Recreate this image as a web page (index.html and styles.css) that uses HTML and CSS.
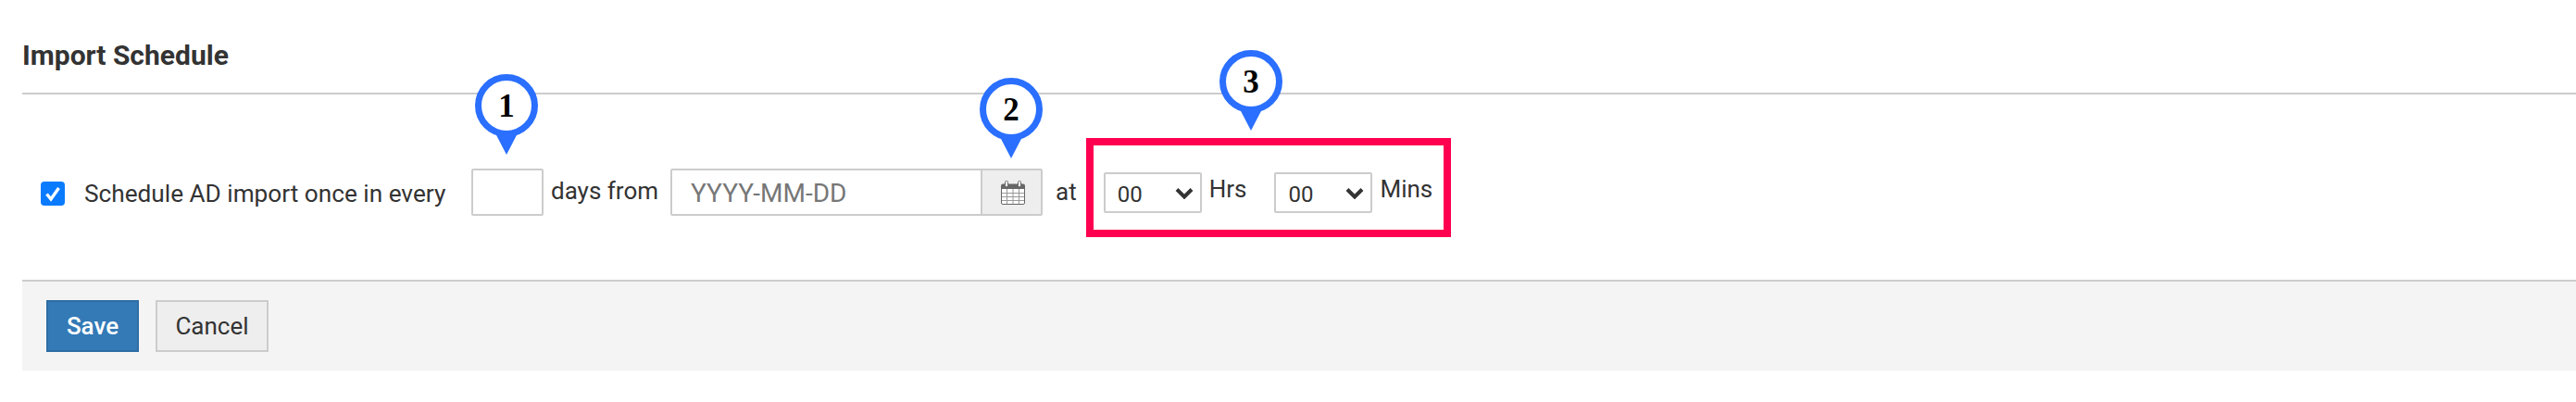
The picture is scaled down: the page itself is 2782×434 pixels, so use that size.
FILE: index.html
```html
<!DOCTYPE html>
<html lang="en">

<head>
    <meta charset="UTF-8">
    <title>Import Schedule</title>
    <link rel="stylesheet" href="styles.css">
</head>

<body>
    <div class="panel">
        <h3 class="panel-title">Import Schedule</h3>

        <form class="schedule-row">
            <input type="checkbox" class="schedule-check" id="scheduleCheck" checked>
            <label class="schedule-label" for="scheduleCheck">Schedule AD import once in every</label>
            <input type="text" class="days-input">
            <span class="row-text days-text">days from</span>
            <div class="date-group">
                <input type="text" class="date-input" placeholder="YYYY-MM-DD">
                <span class="date-addon">
                    <svg width="26" height="26" viewBox="0 0 26 26">
                        <rect x="0.5" y="4" width="25" height="21.5" rx="1.5" fill="#fff" stroke="#666"/>
                        <path d="M0 5.5A2 2 0 0 1 2 4H24A2 2 0 0 1 26 5.5V9H0Z" fill="#666"/>
                        <path d="M1 13.5H25M1 17.5H25M1 21.5H25M6.5 9V25M13 9V25M19.5 9V25" stroke="#999" stroke-width="1" fill="none"/>
                        <rect x="4.5" y="0.5" width="3" height="6" rx="1" fill="#fff" stroke="#666"/>
                        <rect x="18.5" y="0.5" width="3" height="6" rx="1" fill="#fff" stroke="#666"/>
                    </svg>
                </span>
            </div>
            <span class="row-text at-text">at</span>
            <div class="time-box">
                <select class="time-select"><option>00</option></select>
                <span class="row-text hrs-text">Hrs</span>
                <select class="time-select mins-select"><option>00</option></select>
                <span class="row-text mins-text">Mins</span>
            </div>
        </form>

        <div class="panel-footer">
            <button type="button" class="btn btn-primary">Save</button>
            <button type="button" class="btn btn-default">Cancel</button>
        </div>

        <!-- numbered callouts -->
        <div class="pin pin-one"><span class="pin-circle">1</span></div>
        <div class="pin pin-two"><span class="pin-circle">2</span></div>
        <div class="pin pin-three"><span class="pin-circle">3</span></div>
    </div>
</body>

</html>
```
FILE: styles.css
```css
html,
body {
    margin: 0;
    background-color: #fff;
    overflow: hidden;
}

body {
    font-family: 'Roboto', 'Liberation Sans', sans-serif;
    color: #333;
    font-size: 26px;
}

.panel {
    position: relative;
    height: 434px;
    padding-left: 24px;
}

.panel-title {
    margin: 0;
    height: 56px;
    padding-top: 44px;
    border-bottom: 2px solid #ccc;
    font-size: 30px;
    font-weight: 700;
    line-height: 32px;
}

.schedule-row {
    display: flex;
    align-items: flex-start;
    height: 120px;
    padding: 80px 0 0 20px;
}

.schedule-check {
    appearance: none;
    width: 26px;
    height: 26px;
    margin: 14px 0 0;
    border-radius: 4px;
    background-color: #0a7bff;
    background-image: url("data:image/svg+xml,%3Csvg xmlns='http://www.w3.org/2000/svg' viewBox='0 0 26 26'%3E%3Cpath d='M6.5 13.5l4.5 5.5 8.5-12' fill='none' stroke='white' stroke-width='3.4'/%3E%3C/svg%3E");
}

.schedule-label {
    width: 391px;
    margin: 11px 0 0 21px;
    font-size: 26.2px;
    line-height: 32px;
    white-space: nowrap;
}

.days-input {
    width: 78px;
    height: 51px;
    box-sizing: border-box;
    margin-left: 27px;
    border: 2px solid #ccc;
    border-radius: 2px;
    outline: none;
}

.row-text {
    line-height: 32px;
}

.days-text {
    margin: 8px 0 0 8px;
}

.date-group {
    display: flex;
    width: 402px;
    height: 51px;
    box-sizing: border-box;
    margin-left: 13px;
    border: 2px solid #ccc;
    border-radius: 2px;
}

.date-input {
    flex: 1;
    min-width: 0;
    border: none;
    outline: none;
    padding: 2px 0 0 20px;
    font-family: inherit;
    font-size: 28px;
    color: #333;
}

.date-input::placeholder {
    color: #777;
    opacity: 1;
}

.date-addon {
    display: flex;
    align-items: center;
    justify-content: center;
    width: 61px;
    padding-left: 2px;
    border-left: 2px solid #ccc;
    background-color: #eee;
}

.at-text {
    margin: 9px 0 0 14px;
}

.time-box {
    display: flex;
    align-items: flex-start;
    width: 394px;
    height: 107px;
    box-sizing: border-box;
    margin: -33px 0 0 10px;
    padding: 29px 0 0 11px;
    border: 8px solid #ff0050;
}

.time-select {
    appearance: none;
    width: 106px;
    height: 44px;
    box-sizing: border-box;
    border: 2px solid #ccc;
    border-radius: 2px;
    padding: 3px 0 0 13px;
    outline: none;
    font-family: inherit;
    font-size: 24px;
    color: #333;
    background: #fff url("data:image/svg+xml,%3Csvg xmlns='http://www.w3.org/2000/svg' viewBox='0 0 20 13'%3E%3Cpath d='M2 2.5l8 8 8-8' fill='none' stroke='%23333' stroke-width='4'/%3E%3C/svg%3E") no-repeat right 7px center / 20px 13px;
}

.hrs-text {
    margin: 2px 0 0 8px;
}

.mins-select {
    margin-left: 30px;
}

.mins-text {
    margin: 2px 0 0 8px;
}

.panel-footer {
    display: flex;
    gap: 18px;
    height: 98px;
    padding: 20px 0 0 26px;
    box-sizing: border-box;
    border-top: 2px solid #ccc;
    background-color: #f4f4f4;
}

.btn {
    height: 56px;
    box-sizing: border-box;
    font-family: inherit;
    font-size: 26px;
    border: 2px solid;
    border-radius: 0;
}

.btn-primary {
    width: 100px;
    color: #fff;
    font-weight: 500;
    background-color: #337ab7;
    border-color: #2e6da4;
}

.btn-default {
    width: 122px;
    color: #333;
    background-color: #eee;
    border-color: #ccc;
}

/* callouts sit on top of the form */
.pin {
    position: absolute;
    width: 68px;
    height: 68px;
}

.pin::after {
    content: '';
    position: absolute;
    left: 21px;
    top: 62px;
    width: 0;
    height: 0;
    border-left: 13px solid transparent;
    border-right: 13px solid transparent;
    border-top: 25px solid #2a6fff;
}

.pin-circle {
    display: flex;
    align-items: center;
    justify-content: center;
    width: 68px;
    height: 68px;
    padding-top: 2px;
    box-sizing: border-box;
    border: 7px solid #2a6fff;
    border-radius: 50%;
    background-color: #fff;
    color: #000;
    font-family: 'Liberation Serif', serif;
    font-size: 35px;
    font-weight: 700;
}

.pin-one {
    left: 513px;
    top: 80px;
}

.pin-two {
    left: 1058px;
    top: 84px;
}

.pin-three {
    left: 1317px;
    top: 54px;
}
```
